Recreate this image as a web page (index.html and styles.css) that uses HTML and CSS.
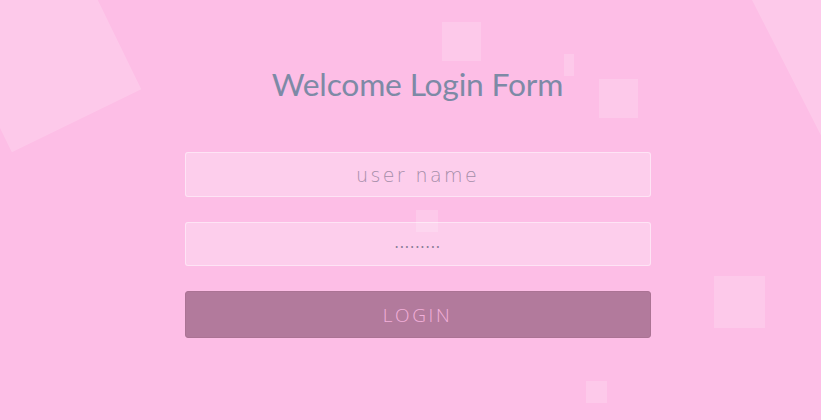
FILE: index.html
```html
<!DOCTYPE html>
<html lang="en">
<head>
<meta charset="utf-8">
<title>Welcome Login Form</title>
<link rel="stylesheet" href="styles.css">
</head>
<body>
<div class="bg">
  <span class="sq sq-big-left"></span>
  <span class="sq sq-big-right"></span>
  <span class="sq sq-a"></span>
  <span class="sq sq-b"></span>
  <span class="sq sq-c"></span>
  <span class="sq sq-d"></span>
  <span class="sq sq-e"></span>
  <span class="sq sq-f"></span>
</div>
<main class="wrap">
  <h1 class="title">Welcome Login Form</h1>
  <form class="form">
    <input class="field field-user" type="text" placeholder="User Name">
    <input class="field field-pass" type="password" placeholder=".........">
    <button class="btn" type="button">Login</button>
  </form>
</main>
</body>
</html>
```
FILE: styles.css
```css
html, body {
  margin: 0;
  padding: 0;
  overflow: hidden;
}
body {
  width: 821px;
  height: 420px;
  background: #fdbee6;
  position: relative;
  font-family: "Lato", "DejaVu Sans", sans-serif;
}
.bg {
  position: absolute;
  inset: 0;
  z-index: 0;
  overflow: hidden;
}
.sq {
  position: absolute;
  display: block;
  background: rgba(255, 255, 255, 0.18);
}
.sq-big-left {
  left: -27px;
  top: -16px;
  width: 144px;
  height: 144px;
  transform: rotate(-26deg);
}
.sq-big-right {
  left: 725px;
  top: -53px;
  width: 300px;
  height: 300px;
  transform: rotate(-27deg);
  transform-origin: 0 0;
}
.sq-a { left: 442px; top: 22px; width: 39px; height: 39px; }
.sq-b { left: 564px; top: 54px; width: 10px; height: 22px; }
.sq-c { left: 599px; top: 79px; width: 39px; height: 39px; }
.sq-d { left: 416px; top: 210px; width: 22px; height: 22px; }
.sq-e { left: 714px; top: 276px; width: 51px; height: 52px; }
.sq-f { left: 586px; top: 381px; width: 21px; height: 22px; }

.wrap {
  position: relative;
  z-index: 1;
  display: flex;
  flex-direction: column;
  align-items: center;
  padding-left: 14px;
  padding-top: 66px;
}
.title {
  margin: 0;
  font-family: "Lato", sans-serif;
  font-weight: 400;
  font-size: 31.8px;
  line-height: 36px;
  color: #7d8aa6;
  letter-spacing: -0.2px;
}
.form {
  margin-top: 50px;
  display: flex;
  flex-direction: column;
  gap: 25px;
  width: 466px;
}
.field {
  box-sizing: border-box;
  width: 466px;
  height: 45px;
  margin: 0;
  border: 1px solid rgba(255, 255, 255, 0.45);
  border-radius: 3px;
  background: rgba(255, 255, 255, 0.25);
  text-align: center;
  outline: none;
  font-family: "DejaVu Sans", sans-serif;
  font-size: 19px;
  color: #9d8aa4;
}
.field::placeholder {
  color: #a48da8;
  opacity: 1;
}
.field-user::placeholder {
  text-transform: lowercase;
  letter-spacing: 2.4px;
  font-weight: 300;
}
.field-pass {
  height: 44px;
  padding-bottom: 8px;
}
.field-pass::placeholder {
  letter-spacing: 0.4px;
  font-size: 15px;
  font-weight: 400;
  color: #8a7d98;
}
.btn {
  box-sizing: border-box;
  width: 466px;
  height: 47px;
  margin: 0;
  border: 1px solid #ab7394;
  border-radius: 3px;
  background: #b27a9c;
  color: #f2b0da;
  font-family: "Open Sans", sans-serif;
  font-weight: 300;
  font-size: 19px;
  letter-spacing: 2.6px;
  text-transform: uppercase;
  cursor: pointer;
}
```
